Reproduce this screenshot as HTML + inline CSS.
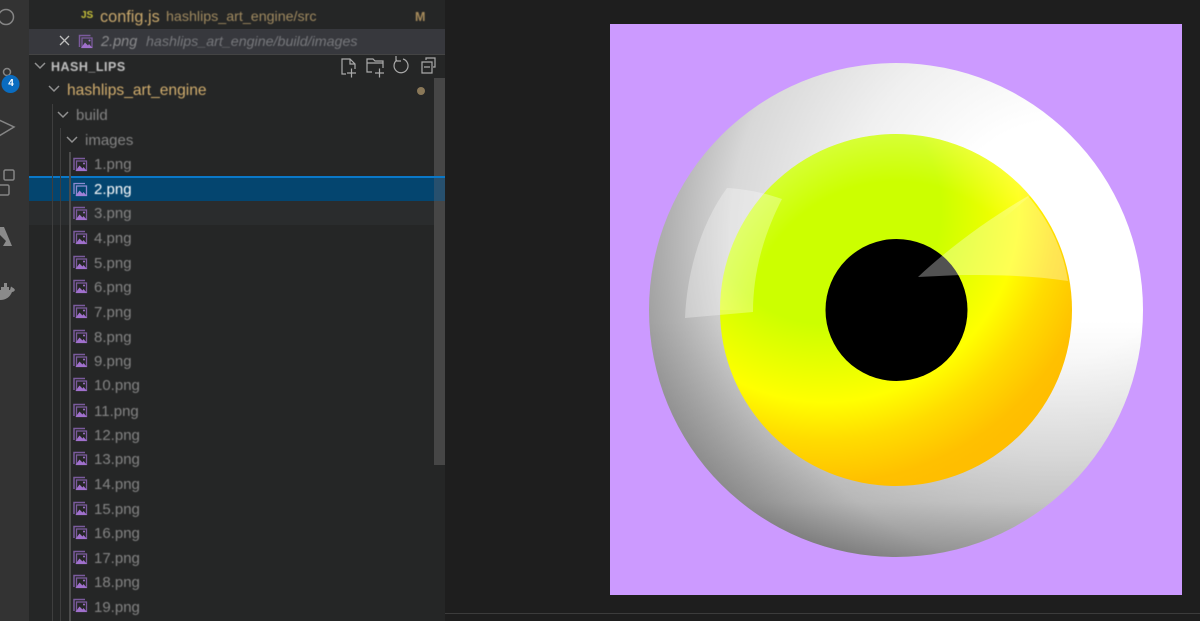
<!DOCTYPE html>
<html><head><meta charset="utf-8">
<style>
html,body{margin:0;padding:0;width:1200px;height:621px;overflow:hidden;background:#1e1e1e}
#root{position:relative;width:1200px;height:621px;overflow:hidden;font-family:"Liberation Sans",sans-serif}
.abs{position:absolute}
#act{left:0;top:0;width:29px;height:621px;background:#333333}
#side{left:29px;top:0;width:416px;height:621px;background:#252626}
.t{position:absolute;white-space:nowrap;font-size:15px;line-height:18px;color:#858585;filter:blur(.45px)}
.f{left:94px;margin-top:1px}
</style></head>
<body><div id="root">
<div class="abs" id="act"></div>
<div class="abs" id="side"></div>
<div class="abs" style="left:29px;top:29px;width:416px;height:25px;background:#37383d;border-bottom:1px solid #444"></div>
<div class="abs" style="left:29px;top:201px;width:405px;height:24px;background:#2a2c2d"></div>
<div class="abs" style="left:29px;top:176px;width:416px;height:25px;background:#04456f"></div>
<div class="abs" style="left:434px;top:78px;width:11px;height:387px;background:#464646"></div>
<div class="abs" style="left:434px;top:178px;width:11px;height:23px;background:#27506e"></div>
<div class="abs" style="left:29px;top:176px;width:416px;height:2px;background:#0a78c8"></div>
<div class="abs" style="left:52px;top:104px;width:1px;height:517px;background:#3e3e3e"></div>
<div class="abs" style="left:60px;top:128px;width:1px;height:493px;background:#3e3e3e"></div>
<div class="abs" style="left:69px;top:152px;width:2px;height:469px;background:#4c4c4c"></div>
<div class="abs" style="left:445px;top:613px;width:755px;height:1px;background:#3c3c3c"></div>

<svg class="abs" style="left:0;top:0" width="445" height="621" fill="none">
<defs>
<g id="ic">
<path d="M74 170V158.500H85" stroke="#7a5a9c" stroke-width="1.500"/>
<rect x="76.500" y="161" width="10" height="9.500" stroke="#7a5a9c" stroke-width="1.300"/>
<path d="M75.500 171L79.500 165.500L82.500 168.500L83.500 167L87 171Z" fill="#a070cc"/>
<circle cx="84" cy="163.500" r="1" fill="#a070cc"/>
</g>
</defs>
<g stroke="#858585" stroke-width="1.500">
<circle cx="6" cy="17" r="7.500"/>
<circle cx="7" cy="72" r="3.500"/>
<path d="M-1 120L14 127L-1 136"/>
<rect x="4" y="170" width="10" height="10" rx="1.500"/>
<rect x="-3" y="185" width="12" height="10" rx="1.500"/>
</g>
<circle cx="10.500" cy="84" r="9" fill="#0a6cc0"/>
<path d="M0 227H4L12 246H3L6 241L0 235Z" fill="#8a8a8a"/>
<path d="M-1 290H1V287H4V283H7V287H9V290H10L11 286.500L14 288.500L15 290C14 291.500 13 292 12 292C10 297 6 300 0 300H-1Z" fill="#8a8a8a"/>
<g stroke="#909090" stroke-width="1.500">
<path d="M35 63L40 68L45 63M49 86L54 91L59 86M58 112L63 117L68 112M67 137L72 142L77 137"/>
</g>
<path d="M60 36L69 45M69 36L60 45" stroke="#bdbdbd" stroke-width="1.300"/>
<g stroke="#aaaaaa" stroke-width="1.200">
<path d="M346 74H342V59H350L355 64V69M350 59V64H355M347 73H356M351.500 68.500V77.500"/>
<path d="M372 72H367V59H373L375 61H383V68M367 63H383M375 73H384M379.500 68.500V77.500"/>
<path d="M397 60A7 7 0 1 0 403 59M396 56V61H401"/>
<path d="M426 60V58H435V67H433M422 62H432V73H422ZM424 67H430"/>
</g>
<circle cx="421" cy="91" r="4" fill="#8a7858"/>
<use href="#ic" x="5.500" y="-123"/>
<use href="#ic"/>
<g stroke="#8a8ad0" stroke-width="1.300"><path d="M74 194V183.500H85"/><rect x="76.500" y="186" width="10" height="9.500"/></g>
<path d="M75.500 196L79.500 190.500L82.500 193.500L83.500 192L87 196Z" fill="#a080d8"/>
<use href="#ic" y="49"/><use href="#ic" y="73"/><use href="#ic" y="98"/><use href="#ic" y="122"/><use href="#ic" y="147"/><use href="#ic" y="172"/><use href="#ic" y="196"/><use href="#ic" y="220"/><use href="#ic" y="246"/><use href="#ic" y="270"/><use href="#ic" y="294"/><use href="#ic" y="319"/><use href="#ic" y="344"/><use href="#ic" y="368"/><use href="#ic" y="393"/><use href="#ic" y="417"/><use href="#ic" y="441"/>
</svg>
<div class="abs" style="left:6px;top:78px;width:10px;text-align:center;color:#fff;font:bold 10px/12px 'Liberation Sans',sans-serif">4</div>

<div class="t" style="left:81px;top:9px;font-size:10px;font-weight:bold;color:#c9c33a;line-height:14px">JS</div>
<div class="t" style="left:100px;top:8px;font-size:16.300px;color:#c9a86c">config.js</div>
<div class="t" style="left:166px;top:9px;font-size:14.250px;color:#a08a60;line-height:17px">hashlips_art_engine/src</div>
<div class="t" style="left:415px;top:9px;font-size:12.500px;font-weight:bold;color:#a88c5c;line-height:17px">M</div>
<div class="t" style="left:101px;top:33px;font-size:14.500px;font-style:italic;color:#8c8c8e">2.png</div>
<div class="t" style="left:146px;top:34px;font-size:14.250px;font-style:italic;color:#77787c;line-height:17px">hashlips_art_engine/build/images</div>
<div class="t" style="left:51px;top:59px;font-size:12.500px;font-weight:bold;color:#c0c0c0;line-height:16px;letter-spacing:.5px">HASH_LIPS</div>
<div class="t" style="left:67px;top:82px;font-size:15.600px;color:#d2ae6e">hashlips_art_engine</div>
<div class="t" style="left:76px;top:107px">build</div>
<div class="t" style="left:85px;top:132px">images</div>
<div class="t f" style="top:155px">1.png</div>
<div class="t f" style="top:180px;color:#fff">2.png</div>
<div class="t f" style="top:204px">3.png</div>
<div class="t f" style="top:229px">4.png</div>
<div class="t f" style="top:254px">5.png</div>
<div class="t f" style="top:278px">6.png</div>
<div class="t f" style="top:303px">7.png</div>
<div class="t f" style="top:328px">8.png</div>
<div class="t f" style="top:352px">9.png</div>
<div class="t f" style="top:376px">10.png</div>
<div class="t f" style="top:402px">11.png</div>
<div class="t f" style="top:426px">12.png</div>
<div class="t f" style="top:450px">13.png</div>
<div class="t f" style="top:475px">14.png</div>
<div class="t f" style="top:500px">15.png</div>
<div class="t f" style="top:524px">16.png</div>
<div class="t f" style="top:549px">17.png</div>
<div class="t f" style="top:573px">18.png</div>
<div class="t f" style="top:598px">19.png</div>

<svg class="abs" style="left:0;top:0" width="1200" height="621">
<defs>
<radialGradient id="sc" gradientUnits="userSpaceOnUse" cx="1060" cy="240" r="440">
<stop offset="0" stop-color="#fff"/><stop offset=".27" stop-color="#fff"/><stop offset=".5" stop-color="#f0f0f0"/><stop offset=".75" stop-color="#d8d8d8"/><stop offset=".9" stop-color="#aeaeae"/><stop offset="1" stop-color="#949494"/>
</radialGradient>
<linearGradient id="sd" gradientUnits="userSpaceOnUse" x1="0" y1="320" x2="0" y2="556">
<stop offset="0" stop-color="#000" stop-opacity="0"/><stop offset=".55" stop-color="#000" stop-opacity=".1"/><stop offset=".77" stop-color="#000" stop-opacity=".15"/><stop offset="1" stop-color="#000" stop-opacity=".33"/>
</linearGradient>
<radialGradient id="ir" gradientUnits="userSpaceOnUse" cx="825" cy="208" r="290">
<stop offset="0" stop-color="#ccff00"/><stop offset=".4" stop-color="#ccff00"/><stop offset=".67" stop-color="#ffff00"/><stop offset=".8" stop-color="#ffdc00"/><stop offset=".95" stop-color="#ffc000"/><stop offset="1" stop-color="#ffbe00"/>
</radialGradient>
<radialGradient id="gl" gradientUnits="userSpaceOnUse" cx="896" cy="330" r="198">
<stop offset=".75" stop-color="#fff" stop-opacity="0"/><stop offset="1" stop-color="#fff" stop-opacity=".22"/>
</radialGradient>
</defs>
<rect x="610" y="24" width="572" height="571" fill="#cc9aff"/>
<circle cx="896" cy="310" r="247" fill="url(#sc)"/>
<circle cx="896" cy="310" r="247" fill="url(#sd)"/>
<circle cx="896" cy="310" r="176" fill="url(#ir)"/>
<path d="M720 310A176 176 0 0 1 1030 196L896 310Z" fill="url(#gl)"/>
<circle cx="896.500" cy="310" r="71" fill="#000"/>
<path d="M685 318C687 270 702 222 727 188C746 189 765 193 782 199C765 232 753 270 753 312Z" fill="#fff" fill-opacity=".3"/>
<path d="M918 277C950 247 990 218 1028 196C1050 222 1063 250 1068 281C1030 275 990 275 960 275Z" fill="#fff" fill-opacity=".32"/>
</svg>
</div></body></html>
